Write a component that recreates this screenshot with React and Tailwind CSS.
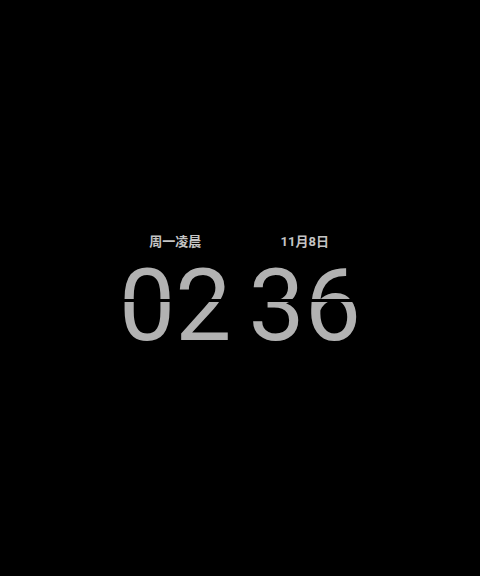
import React from 'react';

function Pair({ label, digits }) {
  return (
    <div className="flex flex-col items-center">
      <div className="text-[13px] font-bold text-[#c4c4c4] leading-none">{label}</div>
      <div className="relative mt-[18px] text-[100px] leading-[80px] text-[#b2b2b2]">
        {digits}
        <div className="absolute left-0 right-0 top-[33px] h-[3px] bg-black" />
      </div>
    </div>
  );
}

export default function App() {
  return (
    <div
      className="w-[480px] h-[576px] bg-black flex items-center justify-center gap-[17px] pt-[4px]"
      style={{ fontFamily: 'Roboto, "Noto Sans CJK SC", sans-serif' }}
    >
      <Pair label="周一凌晨" digits="02" />
      <Pair label="11月8日" digits="36" />
    </div>
  );
}
